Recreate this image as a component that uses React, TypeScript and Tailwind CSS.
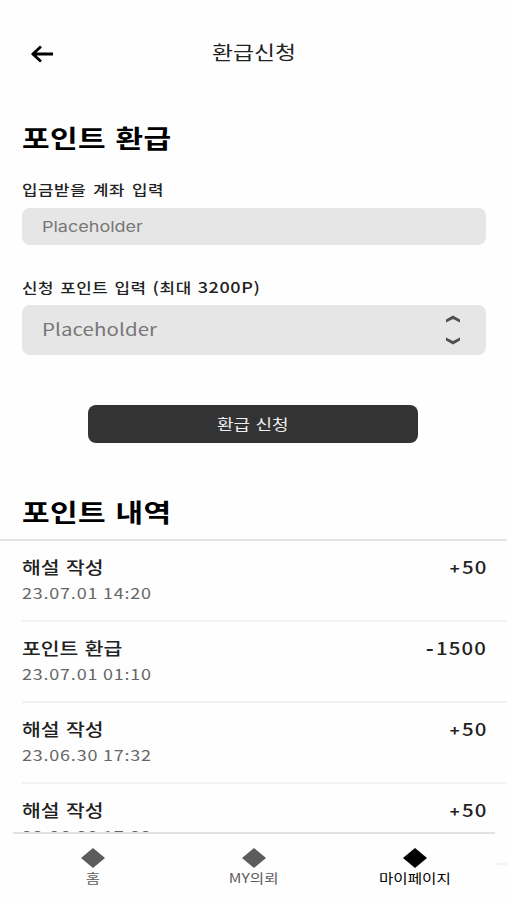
import { ReactNode } from 'react';
import clsx from 'clsx';

interface Entry {
    title: string;
    date: string;
    amount: string;
}

const entries: Entry[] = [
    { title: '해설 작성', date: '23.07.01 14:20', amount: '+50' },
    { title: '포인트 환급', date: '23.07.01 01:10', amount: '-1500' },
    { title: '해설 작성', date: '23.06.30 17:32', amount: '+50' },
    { title: '해설 작성', date: '23.06.30 17:32', amount: '+50' },
];

const tabs = [
    { label: '홈', active: false },
    { label: 'MY의뢰', active: false },
    { label: '마이페이지', active: true },
];

// Wide lettering used across the whole screen
function Wide({ className, children }: { className?: string; children: ReactNode }) {
    return <span className={clsx('inline-block whitespace-nowrap scale-x-120', className)}>{children}</span>;
}

function Chevron({ className }: { className?: string }) {
    return (
        <svg viewBox="0 0 14 8" className={clsx('w-[14px] h-2', className)}>
            <path d="M0 4.4 L7 0.4 L14 4.4 V7.4 L7 3.9 L0 7.4 Z" fill="#4f4f4f" />
        </svg>
    );
}

// Sign is drawn a little smaller than the digits
function Amount({ value }: { value: string }) {
    return (
        <Wide className="origin-right text-[17px] leading-[27px] font-medium text-[#222] tracking-[0.9px] -mr-[1px]">
            <span className={clsx('mr-[1px]', value[0] === '+' ? 'text-[14px] font-bold' : 'text-[18px] font-bold')}>{value[0]}</span>
            {value.slice(1)}
        </Wide>
    );
}

export default function App() {
    return (
        <div className="relative flex flex-col w-full h-[900px] overflow-hidden bg-[#fefefe] text-black font-['Noto_Sans_CJK_KR',sans-serif]">
            {/* Header */}
            <header className="grid grid-cols-[1fr_auto_1fr] items-center h-[106px] shrink-0 pl-[31px] pr-[31px]">
                <svg viewBox="0 0 23 18" className="w-[23px] h-[18px] mt-[2px]" fill="none" stroke="#000" strokeWidth="2.8" strokeLinejoin="round">
                    <path d="M22 9 H2 M10 1.5 L1.8 9 L10 16.5" />
                </svg>
                <Wide className="text-[19px] leading-7 text-[#222] -mt-[2px]">환급신청</Wide>
            </header>

            {/* Refund form */}
            <section className="flex flex-col shrink-0 h-[378px] pl-[22px] pr-[21px] items-start">
                <h1 className="mt-[11px] leading-10 text-[25px] font-bold">
                    <Wide className="origin-left tracking-[0.3px] [word-spacing:2px]">포인트 환급</Wide>
                </h1>
                <label className="mt-[22px] leading-5 text-[14px] font-medium text-[#222]">
                    <Wide className="origin-left tracking-[0.5px] [word-spacing:2px]">입금받을 계좌 입력</Wide>
                </label>
                <div className="mt-[9px] flex items-center w-full h-[37px] rounded-lg bg-[#e6e6e6] pl-[20px] pt-[2px] text-[15px] text-[#777] font-['Inter','Noto_Sans_CJK_KR',sans-serif]">
                    <Wide className="origin-left">Placeholder</Wide>
                </div>
                <label className="mt-[32px] leading-5 text-[14px] font-medium text-[#222]">
                    <Wide className="origin-left tracking-[0.5px] [word-spacing:1.4px]">
                        신청 포인트 입력 <span className="text-[15px]">(</span>최대 <span className="text-[15px]">3200P)</span>
                    </Wide>
                </label>
                <div className="mt-[8px] flex items-center justify-between w-full h-[50px] rounded-lg bg-[#e6e6e6] pl-[20px] pr-[26px] text-[17px] text-[#777]">
                    <Wide className="origin-left tracking-[0.1px] -mt-[2px]">Placeholder</Wide>
                    <div className="flex flex-col gap-[14px]">
                        <Chevron />
                        <Chevron className="rotate-180" />
                    </div>
                </div>
                <button className="mt-[50px] ml-[66px] w-[330px] h-[38px] rounded-lg bg-[#333] text-[15px] text-[#eee]">
                    <Wide className="[word-spacing:1px]">환급 신청</Wide>
                </button>
            </section>

            {/* Point history */}
            <h2 className="shrink-0 h-[55px] pl-[22px] pt-[7px] leading-10 text-[25px] font-bold">
                <Wide className="origin-left tracking-[0.3px] [word-spacing:2px]">포인트 내역</Wide>
            </h2>
            <ul className="shrink-0 border-t-2 border-[#e3e3e3] pl-[22px]">
                {entries.map((entry, i) => (
                    <li key={i} className="flex justify-between h-[81px] pt-[12px] pr-[21px] border-b-2 border-[#f2f2f2]">
                        <div className="flex flex-col items-start">
                            <Wide className="origin-left text-[17px] leading-[27px] font-medium text-[#222] [word-spacing:1.6px]">{entry.title}</Wide>
                            <Wide className="origin-left text-[15px] leading-[26px] text-[#666] tracking-[0.65px]">{entry.date}</Wide>
                        </div>
                        <Amount value={entry.amount} />
                    </li>
                ))}
            </ul>

            {/* Bottom navigation */}
            <nav className="absolute left-[13px] bottom-0 flex w-[482px] h-[68px] border-t-2 border-[#e3e3e3] bg-[#fefefe]">
                {tabs.map(tab => (
                    <div
                        key={tab.label}
                        className={clsx('flex flex-1 flex-col items-center pt-[14px]', tab.active ? 'text-black' : 'text-[#5c5c5c]')}
                    >
                        <svg viewBox="0 0 24 20" className="w-6 h-5" fill="currentColor">
                            <path d="M12 0 L24 10 L12 20 L0 10 Z" />
                        </svg>
                        <Wide className="text-[13px] leading-5">{tab.label}</Wide>
                    </div>
                ))}
            </nav>
        </div>
    );
}
